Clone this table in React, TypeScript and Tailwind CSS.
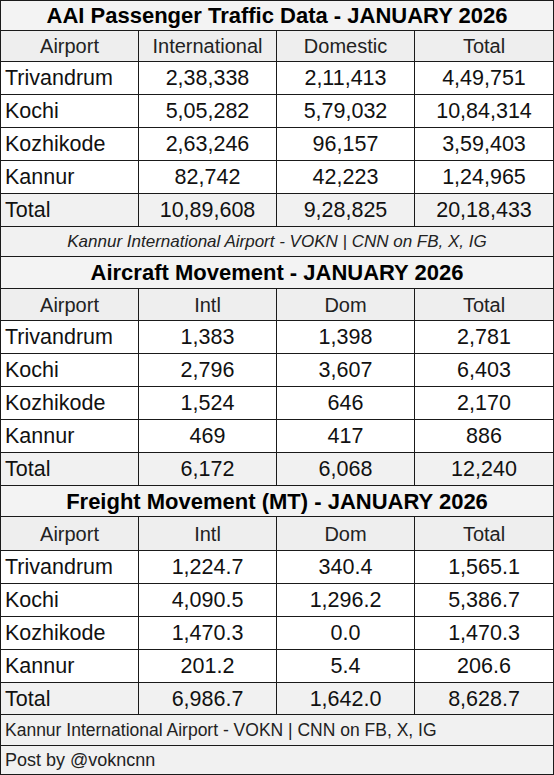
import React from 'react';

type Row = [string, string, string, string];

interface SectionProps {
  title: string;
  head: Row;
  rows: Row[];
  total: Row;
  titleH: string;
  headH: string;
  totalH?: string;
}

const cell = 'flex items-center justify-center border-r border-[#1a1a1a] last:border-r-0';
const first = 'flex items-center pl-[4px] border-r border-[#1a1a1a]';

const Section: React.FC<SectionProps> = ({ title, head, rows, total, titleH, headH, totalH = 'h-[33px]' }) => {
  return (
    <div>
      <div className={`${titleH} flex items-center justify-center bg-[#f3f3f3] border-b border-[#1a1a1a] font-bold text-[22px] text-black`}>
        {title}
      </div>
      <div className={`${headH} grid grid-cols-4 bg-[#eeeeee] border-b border-[#1a1a1a] text-[20px] text-[#222]`}>
        {head.map((h, i) => (
          <div key={i} className={cell}>{h}</div>
        ))}
      </div>
      {rows.map((r, ri) => (
        <div key={ri} className="grid grid-cols-4 h-[33px] bg-white border-b border-[#1a1a1a] text-[21.5px] text-[#111]">
          {r.map((v, i) => (
            <div key={i} className={i === 0 ? first : cell}>{v}</div>
          ))}
        </div>
      ))}
      <div className={`${totalH} grid grid-cols-4 bg-[#f1f1f1] border-b border-[#1a1a1a] text-[21.5px] text-[#111]`}>
        {total.map((v, i) => (
          <div key={i} className={i === 0 ? first : cell}>{v}</div>
        ))}
      </div>
    </div>
  );
};

export default function App() {
  return (
    <div className="w-[554px] h-[775px] bg-white font-['Liberation_Sans',Arial,sans-serif]">
      <div className="border border-[#1a1a1a]">
        <Section
          title="AAI Passenger Traffic Data - JANUARY 2026"
          titleH="h-[30px]"
          headH="h-[31px]"
          head={['Airport', 'International', 'Domestic', 'Total']}
          rows={[
            ['Trivandrum', '2,38,338', '2,11,413', '4,49,751'],
            ['Kochi', '5,05,282', '5,79,032', '10,84,314'],
            ['Kozhikode', '2,63,246', '96,157', '3,59,403'],
            ['Kannur', '82,742', '42,223', '1,24,965'],
          ]}
          total={['Total', '10,89,608', '9,28,825', '20,18,433']}
        />
        <div className="h-[30px] flex items-center justify-center bg-[#f1f1f1] border-b border-[#1a1a1a] italic text-[17px] text-[#222]">
          Kannur International Airport - VOKN | CNN on FB, X, IG
        </div>
        <Section
          title="Aircraft Movement - JANUARY 2026"
          titleH="h-[32px]"
          headH="h-[32px]"
          head={['Airport', 'Intl', 'Dom', 'Total']}
          rows={[
            ['Trivandrum', '1,383', '1,398', '2,781'],
            ['Kochi', '2,796', '3,607', '6,403'],
            ['Kozhikode', '1,524', '646', '2,170'],
            ['Kannur', '469', '417', '886'],
          ]}
          total={['Total', '6,172', '6,068', '12,240']}
        />
        <Section
          title="Freight Movement (MT) - JANUARY 2026"
          titleH="h-[31px]"
          headH="h-[34px]"
          totalH="h-[32px]"
          head={['Airport', 'Intl', 'Dom', 'Total']}
          rows={[
            ['Trivandrum', '1,224.7', '340.4', '1,565.1'],
            ['Kochi', '4,090.5', '1,296.2', '5,386.7'],
            ['Kozhikode', '1,470.3', '0.0', '1,470.3'],
            ['Kannur', '201.2', '5.4', '206.6'],
          ]}
          total={['Total', '6,986.7', '1,642.0', '8,628.7']}
        />
        <div className="h-[31px] flex items-center pl-[4px] bg-[#f1f1f1] border-b border-[#1a1a1a] text-[17.5px] text-[#222]">
          Kannur International Airport - VOKN | CNN on FB, X, IG
        </div>
        <div className="h-[28px] flex items-center pl-[4px] bg-[#f1f1f1] text-[18px] text-[#222]">
          Post by @vokncnn
        </div>
      </div>
    </div>
  );
}
